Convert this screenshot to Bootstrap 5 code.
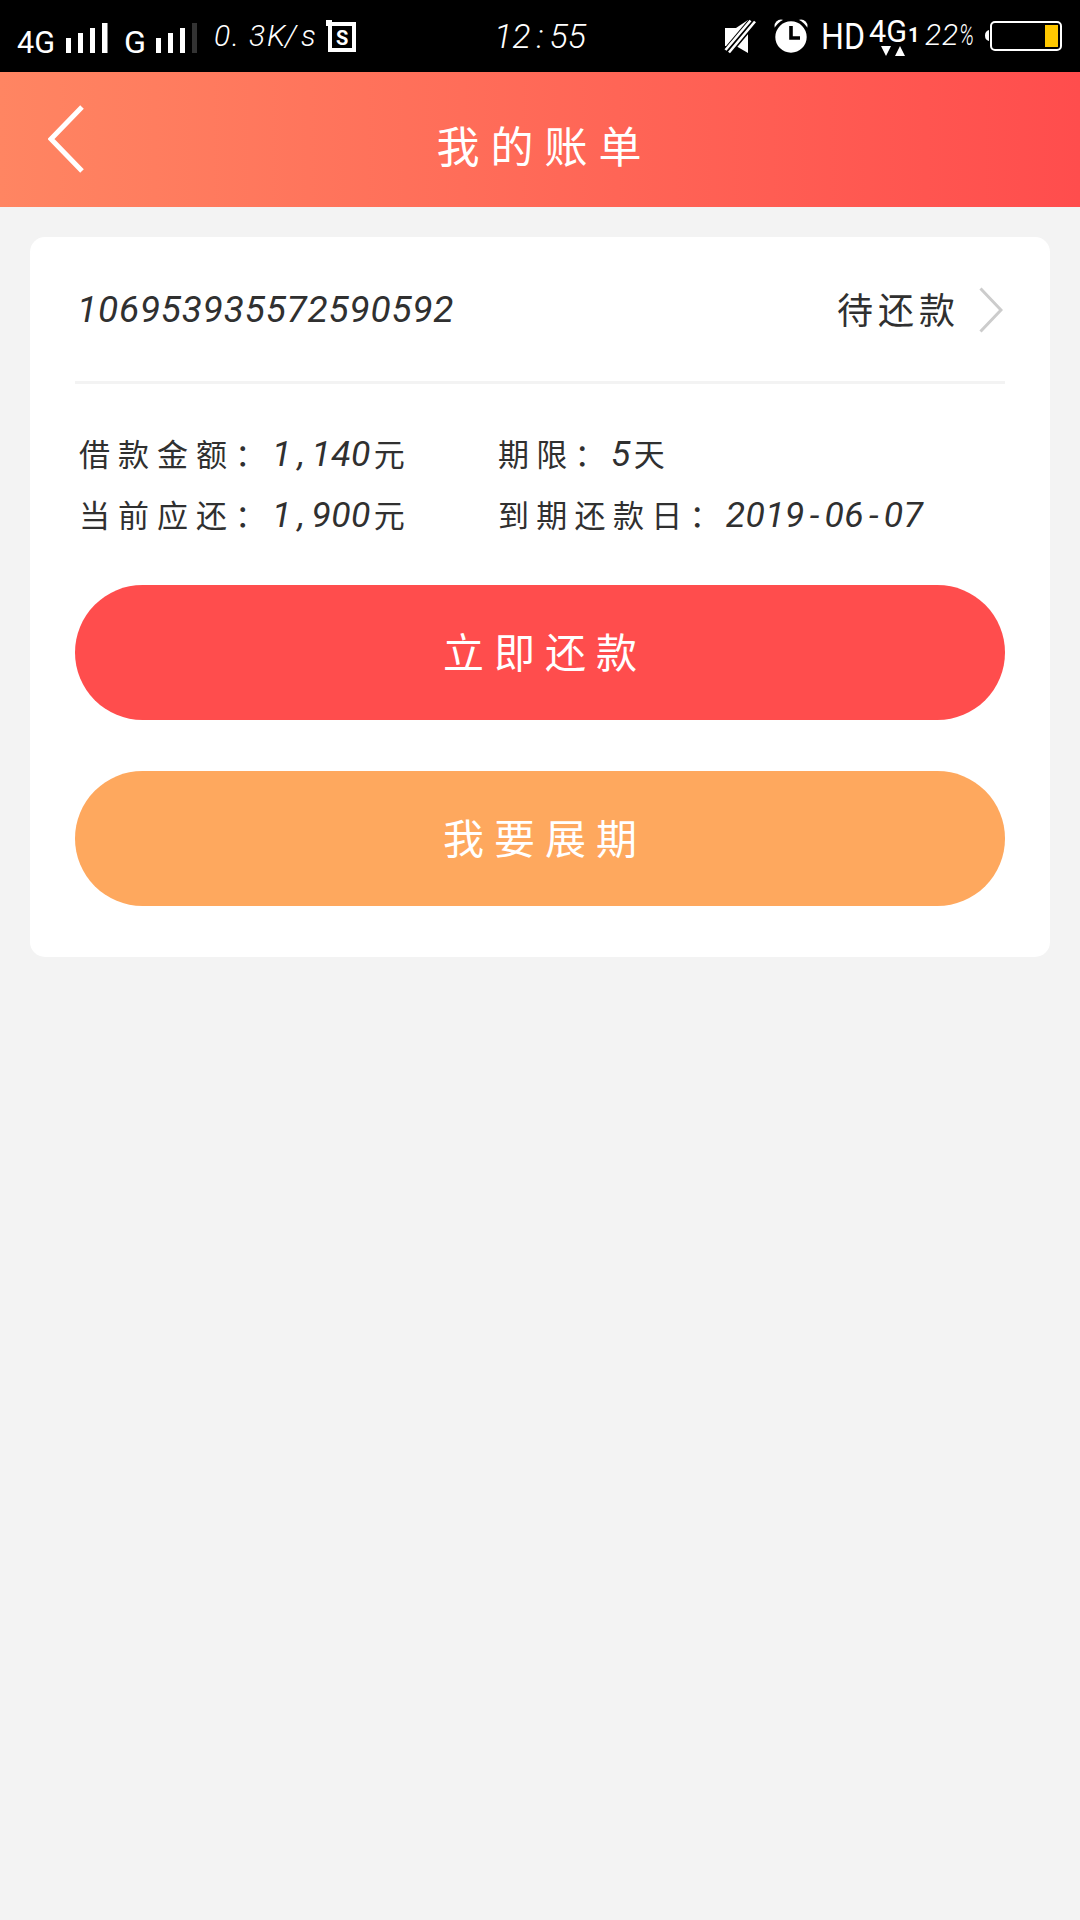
<!DOCTYPE html>
<html lang="zh-CN">
<head>
<meta charset="utf-8">
<meta name="viewport" content="width=device-width, initial-scale=1">
<title>我的账单</title>
<link href="https://cdn.jsdelivr.net/npm/bootstrap@5.3.0/dist/css/bootstrap.min.css" rel="stylesheet">
<style>
  body { background: #f3f3f3; color: #303030; font-family: "Liberation Sans", "Noto Sans CJK SC", sans-serif; min-height: 1920px; }
  .statusbar { height: 72px; background: #000; color: #fff; }
  .statusbar svg, .titlebar svg, .order-head svg { display: block; }
  .hand { font-family: Roboto, "Liberation Sans", sans-serif; font-style: italic; font-weight: 400; }
  .statusbar .hand { font-weight: 300; }
  .clock { font-size: 34px; line-height: 72px; }
  .titlebar { height: 135px; padding: 0 48px; background: linear-gradient(90deg, #ff8562, #ff4d4d); color: #fff; }
  .titlebar svg { margin-bottom: 2px; }
  .titlebar h1, .han { font-family: "Noto Sans CJK SC", sans-serif; font-weight: 400; }
  .titlebar h1 { font-size: 43px; letter-spacing: 11px; line-height: 60px; padding: 8px 0 0 9px; }
  .bill { margin: 30px; height: 720px; border-radius: 15px; padding: 0 45px; }
  .order-head { height: 147px; border-bottom: 3px solid #f3f3f3; padding: 0 2px 0 2px; }
  .order-no { font-size: 37px; letter-spacing: .8px; line-height: 50px; padding-top: 2px; }
  .order-state { font-size: 36px; letter-spacing: 5px; line-height: 50px; margin: -3px 19px 0 0; }
  .order-head svg { margin-top: 2px; }
  .facts { padding-top: 39px; height: 201px; line-height: 60px; white-space: nowrap; font-size: 35.500px; }
  .fact-left { width: 423px; padding-left: 4px; }
  .facts .han { font-size: 31px; letter-spacing: 8px; }
  .facts .hand { letter-spacing: .4px; }
  .facts .han + .hand { margin-left: -2px; }
  .facts .hand + .han { margin-left: 3px; }
  .fact-right .han { letter-spacing: 7.300px; }
  .cell { display: inline-block; width: .556em; text-align: center; }
  .pill { height: 135px; border-radius: 68px; color: #fff; font-size: 41px; letter-spacing: 10px; padding: 0 0 4px 10px; border: 0; }
  .pill-red { background: #ff4d4d; }
  .pill-orange { background: #fea85e; margin-top: 51px; }
</style>
<script src="https://cdn.jsdelivr.net/npm/bootstrap@5.3.0/dist/js/bootstrap.bundle.min.js"></script>
</head>
<body>
<div class="statusbar d-flex justify-content-between">
  <svg width="370" height="72" viewBox="0 0 370 72" fill="#fff">
    <g font-family="Roboto, sans-serif" font-size="32">
      <text x="17" y="53" textLength="38" lengthAdjust="spacingAndGlyphs">4G</text>
      <text x="124" y="53" textLength="22" lengthAdjust="spacingAndGlyphs">G</text>
    </g>
    <path d="M66 38h5v15h-5zM78 33h5v20h-5zM90 28h5v25h-5zM102 23h5.500v30h-5.500zM156 38h5v15h-5zM168 33h5v20h-5zM180 28h5v25h-5z"/>
    <path fill="#333" d="M192 23h5v30h-5z"/>
    <text class="hand" font-size="30" y="46" x="214 232 249 267 285 301">0.3K/s</text>
    <path d="M326 20h6v2h24v30h-28V26h-2zM332 26v22h20V26z" fill-rule="evenodd"/>
    <text x="336" y="44.500" font-family="Roboto, sans-serif" font-size="20" font-weight="700">S</text>
  </svg>
  <div class="clock hand d-flex"><span>12</span><span class="cell">:</span><span>55</span></div>
  <svg width="370" height="72" viewBox="710 0 370 72" fill="#fff">
    <path d="M725 28h11l12-8v33l-12-7h-11z"/>
    <path d="M727 52l27-32" stroke="#000" stroke-width="9"/>
    <path d="M725.500 50L750.500 20.500M729 52.500l26-31" stroke="#fff" stroke-width="2.600"/>
    <circle cx="781" cy="26" r="6.500"/><circle cx="801" cy="26" r="6.500"/>
    <circle cx="791" cy="37" r="17.200" stroke="#000" stroke-width="3"/>
    <path d="M791 26v12h9" fill="none" stroke="#000" stroke-width="3.600"/>
    <g font-family="Roboto, sans-serif">
      <text x="821" y="49" font-size="36.500" textLength="44" lengthAdjust="spacingAndGlyphs">HD</text>
      <text x="869" y="42" font-size="32" textLength="38" lengthAdjust="spacingAndGlyphs">4G</text>
      <text x="908" y="42" font-size="20" font-weight="700">1</text>
    </g>
    <path d="M881 46h10l-5 10zM895 56h10l-5-10z"/>
    <text class="hand" font-size="30" y="45" x="925 942">22</text>
    <text class="hand" font-size="30" y="45" x="959" textLength="15" lengthAdjust="spacingAndGlyphs">%</text>
    <path d="M989 30v11q-4-1-4-5.500t4-5.500z"/>
    <rect x="991" y="22" width="70" height="28" rx="4" fill="none" stroke="#fff" stroke-width="2"/>
    <path fill="#ffc800" d="M1045 25h13v22h-13z"/>
  </svg>
</div>

<header class="titlebar d-flex align-items-center justify-content-between">
  <svg width="37" height="68" viewBox="0 0 37 68" fill="none" stroke="#fff" stroke-width="5"><path d="M34 2L3 34l31 32"/></svg>
  <h1 class="mb-0">我的账单</h1>
  <span style="width:37px"></span>
</header>

<main class="bill bg-white">
  <div class="order-head d-flex align-items-center">
    <span class="order-no hand me-auto">106953935572590592</span>
    <span class="order-state han">待还款</span>
    <svg width="24" height="46" viewBox="0 0 24 46" fill="none" stroke="#ccc" stroke-width="3"><path d="M1.500 1.500L22 23 1.500 44.500"/></svg>
  </div>
  <div class="facts d-flex">
    <div class="fact-left">
      <div><span class="han">借款金额：</span><span class="hand">1<span class="cell">,</span>140</span><span class="han">元</span></div>
      <div><span class="han">当前应还：</span><span class="hand">1<span class="cell">,</span>900</span><span class="han">元</span></div>
    </div>
    <div class="fact-right">
      <div><span class="han">期限：</span><span class="hand">5</span><span class="han">天</span></div>
      <div><span class="han">到期还款日：</span><span class="hand">2019<span class="cell">-</span>06<span class="cell">-</span>07</span></div>
    </div>
  </div>
  <button class="pill pill-red han btn w-100 d-block">立即还款</button>
  <button class="pill pill-orange han btn w-100 d-block">我要展期</button>
</main>
</body>
</html>
